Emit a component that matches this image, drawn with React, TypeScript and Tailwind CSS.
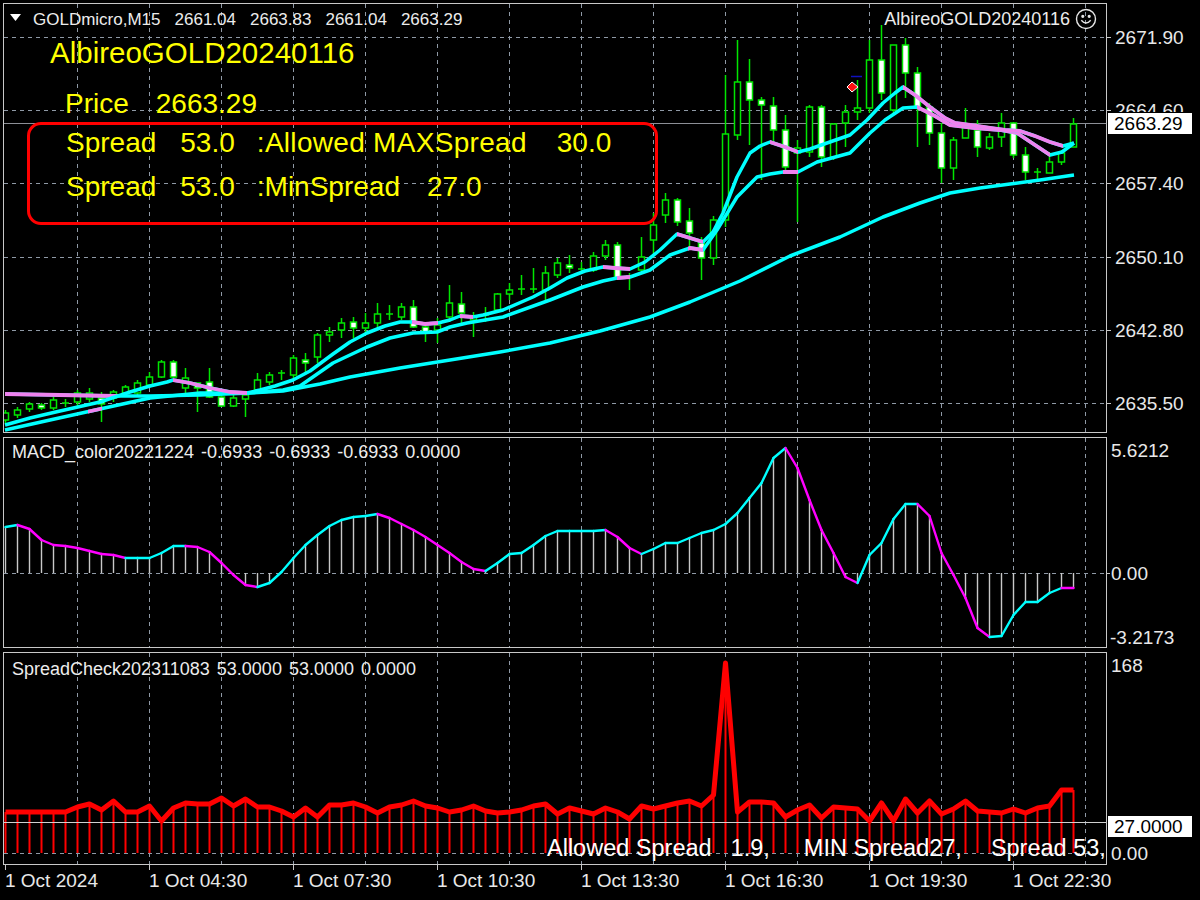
import React from 'react'

// ─── Chart data (page pixel coordinates) ─────────────────────

const GREEN = '#00e600'
const CYAN = '#00ffff'
const PINK = '#ee82ee'
const MAGENTA = '#ff00ff'
const GRID = '#8f99a6'

const barX = (i: number) => 5 + 12 * i
const GRID_X = Array.from({ length: 15 }, (_, k) => 77 + 72 * k)
const MAIN_GRID_Y = [37, 110, 183, 257, 330, 403]

// bodyTop, bodyBottom, wickTop, wickBottom, kind (0 hollow, 1 white, 2 cross)
type Candle = [number, number, number, number, number]
const CANDLES: Candle[] = [
  [413, 420, 410, 423, 0], [410, 415, 407, 418, 0], [404, 409, 402, 412, 0], [405, 408, 403, 410, 1],
  [400, 408, 397, 410, 0], [403, 403, 399, 407, 2], [393, 402, 390, 407, 0], [393, 399, 388, 402, 0],
  [398, 404, 392, 422, 1], [392, 398, 390, 402, 0], [387, 393, 385, 397, 0], [383, 393, 380, 397, 0],
  [377, 385, 372, 388, 0], [362, 377, 360, 378, 0], [362, 377, 360, 378, 1], [378, 388, 368, 397, 0],
  [383, 388, 383, 412, 1], [382, 397, 368, 398, 1], [397, 406, 393, 407, 1], [398, 406, 395, 407, 0],
  [395, 399, 393, 417, 0], [380, 390, 373, 393, 0], [375, 382, 372, 385, 0], [373, 373, 370, 380, 2],
  [358, 375, 355, 380, 0], [360, 363, 353, 373, 1], [335, 357, 333, 363, 0], [332, 335, 327, 342, 0],
  [323, 330, 318, 338, 0], [322, 328, 317, 338, 1], [323, 328, 313, 335, 0], [314, 323, 303, 328, 0],
  [314, 314, 305, 320, 2], [307, 317, 303, 320, 0], [307, 327, 300, 328, 1], [327, 332, 323, 342, 1],
  [325, 330, 318, 343, 0], [303, 317, 285, 322, 0], [304, 313, 292, 323, 1], [317, 320, 312, 337, 0],
  [315, 315, 307, 322, 2], [294, 310, 293, 312, 0], [290, 294, 283, 300, 0], [289, 289, 275, 295, 2],
  [289, 289, 268, 293, 2], [273, 290, 266, 300, 0], [263, 275, 258, 278, 0], [265, 268, 255, 273, 1],
  [269, 269, 262, 273, 2], [256, 270, 252, 272, 0], [245, 256, 240, 260, 0], [245, 278, 242, 280, 1],
  [276, 276, 273, 290, 2], [257, 270, 237, 272, 0], [225, 240, 213, 257, 0], [200, 215, 193, 223, 0],
  [200, 222, 198, 226, 1], [221, 233, 208, 250, 1], [243, 258, 237, 280, 1], [220, 258, 216, 265, 0],
  [134, 220, 75, 227, 0], [82, 135, 40, 140, 0], [82, 100, 59, 145, 1], [100, 105, 97, 180, 1],
  [106, 130, 97, 145, 1], [130, 167, 115, 170, 1], [148, 153, 140, 222, 0], [107, 152, 105, 157, 0],
  [107, 157, 105, 167, 1], [124, 157, 123, 160, 0], [112, 123, 105, 147, 0], [108, 112, 80, 120, 0],
  [60, 108, 40, 113, 0], [60, 93, 25, 100, 1], [45, 110, 45, 113, 0], [45, 73, 38, 98, 1],
  [73, 108, 67, 147, 1], [107, 133, 103, 145, 1], [133, 168, 123, 183, 1], [140, 168, 137, 180, 0],
  [127, 138, 108, 138, 0], [130, 147, 120, 157, 1], [137, 148, 133, 150, 0], [123, 137, 113, 147, 0],
  [123, 155, 122, 158, 1], [155, 172, 147, 180, 1], [172, 172, 168, 180, 2], [162, 173, 152, 173, 0],
  [153, 162, 150, 165, 0], [124, 147, 118, 147, 0],
]

const FAST = [
  [5, 425], [30, 418], [60, 411], [100, 402], [130, 392], [150, 386], [167, 382], [173, 380], [190, 383],
  [210, 388], [230, 392], [247, 393], [260, 390], [275, 386], [293, 380], [310, 371], [333, 354], [350, 342],
  [367, 333], [385, 326], [400, 322], [412, 322], [425, 324], [438, 323], [450, 320], [460, 316], [473, 317],
  [483, 315], [503, 310], [533, 297], [550, 288], [567, 278], [585, 271], [603, 267], [615, 268], [630, 269],
  [645, 262], [660, 250], [677, 234], [690, 238], [703, 242], [713, 232], [723, 213], [737, 177], [750, 153],
  [760, 146], [770, 142], [785, 147], [798, 152], [810, 149], [827, 143], [850, 135], [867, 120], [883, 103],
  [895, 93], [903, 87], [915, 95], [930, 107], [945, 118], [955, 123], [970, 125], [990, 128], [1005, 130],
  [1020, 131], [1035, 136], [1050, 142], [1063, 146], [1074, 143],
]
const MEDIUM = [
  [5, 430], [50, 420], [100, 409], [150, 398], [200, 393], [247, 393], [283, 390], [300, 386], [333, 363],
  [367, 347], [390, 338], [413, 333], [437, 332], [450, 327], [467, 323], [503, 317], [550, 300], [583, 287],
  [603, 281], [617, 278], [630, 277], [650, 270], [670, 255], [690, 248], [703, 250], [717, 230], [737, 197],
  [757, 177], [770, 174], [783, 172], [798, 172], [817, 162], [850, 153], [870, 133], [885, 120], [903, 108],
  [917, 107], [935, 116], [950, 125], [975, 128], [1000, 130], [1017, 133], [1035, 145], [1050, 155],
  [1062, 152], [1074, 143],
]
const SLOW = [
  [5, 394], [60, 395], [115, 396], [150, 396], [200, 395], [250, 393], [283, 391], [320, 384], [350, 377],
  [400, 368], [450, 360], [500, 352], [550, 343], [600, 331], [650, 317], [690, 302], [740, 281], [790, 256],
  [840, 237], [883, 217], [920, 203], [950, 193], [980, 188], [1010, 184], [1040, 180], [1074, 175],
]
const FAST_PINK: [number, number][] = [[173, 247], [412, 438], [460, 473], [603, 630], [677, 703], [770, 798], [903, 1063]]
const MEDIUM_PINK: [number, number][] = [[88, 102], [617, 630], [688, 703], [783, 798], [917, 1050]]
const SLOW_PINK: [number, number][] = [[0, 118]]

const MACD = [
  527, 525, 529, 540, 545, 546, 548, 551, 554, 555, 558, 558, 558, 553, 546, 546, 547, 552, 563, 575,
  585, 587, 583, 572, 558, 545, 535, 526, 520, 517, 516, 514, 518, 524, 530, 537, 545, 553, 562, 569,
  571, 563, 554, 553, 545, 536, 531, 531, 531, 531, 530, 537, 548, 554, 549, 543, 543, 538, 533, 530,
  524, 513, 498, 483, 458, 448, 468, 500, 530, 553, 577, 583, 555, 543, 519, 504, 504, 516, 553, 575,
  598, 628, 637, 636, 615, 602, 602, 593, 588, 588,
]

const SPREAD = [
  812, 812, 812, 812, 812, 812, 807, 804, 810, 801, 812, 812, 806, 821, 808, 803, 804, 804, 798, 806,
  799, 807, 807, 811, 817, 808, 817, 805, 805, 803, 807, 813, 807, 805, 801, 806, 808, 812, 810, 806,
  811, 813, 812, 810, 806, 804, 814, 808, 811, 814, 808, 812, 819, 806, 809, 806, 803, 801, 806, 795,
  663, 812, 802, 802, 803, 817, 810, 805, 818, 807, 808, 809, 821, 803, 821, 799, 813, 801, 814, 809,
  801, 811, 812, 813, 809, 813, 808, 806, 790, 790,
]

const TIME_LABELS = ['1 Oct 2024', '1 Oct 04:30', '1 Oct 07:30', '1 Oct 10:30', '1 Oct 13:30', '1 Oct 16:30', '1 Oct 19:30', '1 Oct 22:30']

const pts = (p: number[][]) => p.map(([x, y]) => `${x},${y}`).join(' ')

// ─── Shared pieces ───────────────────────────────────────────

function VerticalGrid({ y1, y2 }: { y1: number; y2: number }) {
  return (
    <>
      {GRID_X.map(x => (
        <line key={x} x1={x + 0.5} x2={x + 0.5} y1={y1} y2={y2} stroke={GRID} strokeDasharray="4 4" />
      ))}
    </>
  )
}

function PinkClip({ id, ranges }: { id: string; ranges: [number, number][] }) {
  return (
    <clipPath id={id}>
      {ranges.map(([a, b]) => <rect key={a} x={a} y={0} width={b - a} height={900} />)}
    </clipPath>
  )
}

function MaLine({ points, clip }: { points: number[][]; clip: string }) {
  return (
    <>
      <polyline points={pts(points)} fill="none" stroke={CYAN} strokeWidth={3.5} strokeLinejoin="round" />
      <polyline points={pts(points)} fill="none" stroke={PINK} strokeWidth={3.8} strokeLinejoin="round" clipPath={`url(#${clip})`} />
    </>
  )
}

// ─── Main price pane ─────────────────────────────────────────

function PriceChart() {
  return (
    <svg className="block" width={1102} height={428} viewBox="4 4 1102 428">
      <defs>
        <PinkClip id="pinkFast" ranges={FAST_PINK} />
        <PinkClip id="pinkMedium" ranges={MEDIUM_PINK} />
        <PinkClip id="pinkSlow" ranges={SLOW_PINK} />
      </defs>
      {MAIN_GRID_Y.map(y => (
        <line key={y} x1={4} x2={1106} y1={y + 0.5} y2={y + 0.5} stroke={GRID} strokeDasharray="4 4" />
      ))}
      <VerticalGrid y1={4} y2={432} />
      <line x1={4} x2={1106} y1={123.5} y2={123.5} stroke="#8c8f96" />

      {CANDLES.map(([t, b, wt, wb, k], i) => {
        const x = barX(i) + 0.5
        return (
          <g key={i}>
            <line x1={x} x2={x} y1={wt} y2={wb} stroke={GREEN} strokeWidth={1.5} />
            {k === 2 ? (
              <line x1={x - 3.5} x2={x + 3.5} y1={t} y2={t} stroke={GREEN} strokeWidth={1.5} />
            ) : (
              <rect x={x - 3} y={t} width={6} height={Math.max(b - t, 3)} fill={k === 1 ? '#ffffff' : '#000000'} stroke={GREEN} strokeWidth={1.5} />
            )}
          </g>
        )
      })}

      <MaLine points={SLOW} clip="pinkSlow" />
      <MaLine points={MEDIUM} clip="pinkMedium" />
      <MaLine points={FAST} clip="pinkFast" />

      {/* entry arrow */}
      <line x1={851} x2={862} y1={76.5} y2={76.5} stroke="#1010c0" strokeWidth={1.5} />
      <path d="M847 87 L852 82 L858 87 L852 92 Z" fill="#ff1010" stroke="#ffffff" strokeWidth={1} />
    </svg>
  )
}

function Smiley() {
  return (
    <svg width={22} height={22} viewBox="0 0 22 22" fill="none" stroke="#e6e6e6" strokeWidth={1.4}>
      <circle cx={11} cy={11} r={9.5} />
      <circle cx={7.8} cy={8.3} r={0.9} fill="#e6e6e6" />
      <circle cx={14.2} cy={8.3} r={0.9} fill="#e6e6e6" />
      <path d="M6.3 12.3 Q11 17.8 15.7 12.3" />
    </svg>
  )
}

// ─── MACD pane ───────────────────────────────────────────────

function MacdChart() {
  return (
    <svg className="block" width={1102} height={209} viewBox="4 438 1102 209">
      <VerticalGrid y1={438} y2={647} />
      <line x1={4} x2={1106} y1={573.5} y2={573.5} stroke={GRID} strokeDasharray="4 4" />
      {MACD.map((y, i) => (
        <line key={i} x1={barX(i) + 0.5} x2={barX(i) + 0.5} y1={573} y2={y} stroke="#c8c8c8" strokeWidth={1.4} />
      ))}
      {MACD.slice(1).map((y, j) => {
        const i = j + 1
        const up = y <= MACD[i - 1] && i !== MACD.length - 1
        return (
          <line key={i} x1={barX(i - 1) + 0.5} y1={MACD[i - 1]} x2={barX(i) + 0.5} y2={y} stroke={up ? CYAN : MAGENTA} strokeWidth={2.4} strokeLinecap="round" />
        )
      })}
    </svg>
  )
}

// ─── Spread pane ─────────────────────────────────────────────

function SpreadChart() {
  return (
    <svg className="block" width={1102} height={211} viewBox="4 653 1102 211">
      <VerticalGrid y1={653} y2={864} />
      <line x1={4} x2={1106} y1={853.5} y2={853.5} stroke={GRID} strokeDasharray="4 4" />
      {SPREAD.map((y, i) => (
        <line key={i} x1={barX(i) + 0.5} x2={barX(i) + 0.5} y1={853} y2={y} stroke="#ff0000" strokeWidth={2} />
      ))}
      <line x1={4} x2={1106} y1={822.5} y2={822.5} stroke="#d0d0d0" />
      <polyline points={SPREAD.map((y, i) => `${barX(i) + 0.5},${y}`).join(' ')} fill="none" stroke="#ff0000" strokeWidth={5} strokeLinejoin="round" />
    </svg>
  )
}

// ─── App ─────────────────────────────────────────────────────

export default function App() {
  return (
    <div className="relative flex h-[900px] w-[1200px] flex-col overflow-hidden bg-black pt-[3px] font-['Liberation_Sans',Arial,sans-serif] text-[#e8e8e8]">
      {/* Price pane */}
      <div className="flex h-[430px]">
        <div className="relative ml-[3px] h-[430px] w-[1104px] shrink-0 border border-[#c8c8c8]">
          <PriceChart />
          <svg className="absolute left-[6px] top-[10px]" width={11} height={7} viewBox="0 0 11 7">
            <polygon points="0,0 11,0 5.5,7" fill="#ffffff" />
          </svg>
          <div className="absolute left-[29px] top-[5px] flex h-[20px] items-center gap-[14px] text-[17px] leading-none text-[#ececec]">
            <span>GOLDmicro,M15</span>
            <span>2661.04</span>
            <span>2663.83</span>
            <span>2661.04</span>
            <span>2663.29</span>
          </div>
          <div className="absolute right-[9px] top-[4px] flex h-[22px] items-center gap-[5px] text-[18px] leading-none text-[#ececec]">
            <span>AlbireoGOLD20240116</span>
            <Smiley />
          </div>

          <div className="absolute left-[46px] top-[34px] text-[29.5px] leading-none text-[#ffff00]">AlbireoGOLD20240116</div>
          <div className="absolute left-[61px] top-[86px] flex gap-[27px] text-[28px] leading-none text-[#ffff00]">
            <span>Price</span>
            <span>2663.29</span>
          </div>

          <div className="absolute left-[23px] top-[118px] h-[103px] w-[631px] rounded-[14px] border-[3px] border-[#ff0000]" />
          <div className="absolute left-[62px] top-[125px] flex text-[28px] leading-none text-[#ffff00]">
            <span>Spread</span>
            <span className="ml-[24px]">53.0</span>
            <span className="ml-[22px] tracking-[0.3px]">:Allowed MAXSpread</span>
            <span className="ml-[30px]">30.0</span>
          </div>
          <div className="absolute left-[62px] top-[169px] flex text-[28px] leading-none text-[#ffff00]">
            <span>Spread</span>
            <span className="ml-[24px]">53.0</span>
            <span className="ml-[22px]">:MinSpread</span>
            <span className="ml-[27px]">27.0</span>
          </div>
        </div>

        <div className="relative flex-1 text-[19px] leading-none">
          {[
            ['top-[23px]', '2671.90'],
            ['top-[96px]', '2664.60'],
            ['top-[169px]', '2657.40'],
            ['top-[243px]', '2650.10'],
            ['top-[316px]', '2642.80'],
            ['top-[389px]', '2635.50'],
          ].map(([top, label]) => (
            <div key={label} className={`absolute left-0 flex h-[22px] items-center ${top}`}>
              <span className="h-px w-[4px] bg-[#c8c8c8]" />
              <span className="ml-[4px]">{label}</span>
            </div>
          ))}
          <div className="absolute left-0 top-[109px] flex h-[23px] w-[86px] items-center border border-black bg-white pl-[6px] text-black">
            2663.29
          </div>
        </div>
      </div>

      {/* MACD pane */}
      <div className="mt-[4px] flex h-[211px]">
        <div className="relative ml-[3px] h-[211px] w-[1104px] shrink-0 border border-[#c8c8c8]">
          <MacdChart />
          <div className="absolute left-[8px] top-[3px] flex h-[22px] items-center gap-[7px] text-[18px] leading-none text-[#ececec]">
            <span>MACD_color20221224</span>
            <span>-0.6933</span>
            <span>-0.6933</span>
            <span>-0.6933</span>
            <span>0.0000</span>
          </div>
        </div>
        <div className="relative flex-1 text-[19px] leading-none">
          <div className="absolute left-0 top-[2px] flex h-[22px] items-center pl-[4px]">5.6212</div>
          <div className="absolute left-0 top-[125px] flex h-[22px] items-center">
            <span className="h-px w-[3px] bg-[#c8c8c8]" />
            <span className="ml-[1px]">0.00</span>
          </div>
          <div className="absolute left-0 top-[189px] flex h-[22px] items-center pl-[3px]">-3.2173</div>
        </div>
      </div>

      {/* Spread pane */}
      <div className="mt-[4px] flex h-[213px]">
        <div className="relative ml-[3px] h-[213px] w-[1104px] shrink-0 border border-[#c8c8c8]">
          <SpreadChart />
          <div className="absolute left-[8px] top-[5px] flex h-[22px] items-center gap-[7px] text-[18px] leading-none text-[#ececec]">
            <span>SpreadCheck202311083</span>
            <span>53.0000</span>
            <span>53.0000</span>
            <span>0.0000</span>
          </div>
        </div>
        <div className="relative flex-1 text-[19px] leading-none">
          <div className="absolute left-0 top-[2px] flex h-[22px] items-center pl-[4px]">168</div>
          <div className="absolute left-0 top-[163px] flex h-[23px] w-[86px] items-center border border-black bg-white pl-[6px] text-black">
            27.0000
          </div>
          <div className="absolute left-0 top-[190px] flex h-[22px] items-center pl-[4px]">0.00</div>
        </div>
      </div>

      {/* Time axis */}
      <div className="flex pl-[5px]">
        {TIME_LABELS.map(label => (
          <div key={label} className="flex w-[144px] shrink-0 flex-col">
            <span className="h-[5px] w-px bg-[#c8c8c8]" />
            <span className="text-[19px] leading-[22px] whitespace-nowrap">{label}</span>
          </div>
        ))}
      </div>

      {/* Spread status text drawn over the lower pane */}
      <div className="absolute left-[547px] top-[837px] flex whitespace-nowrap text-[23.5px] leading-none text-white">
        <span>Allowed Spread</span>
        <span className="ml-[19px]">1.9,</span>
        <span className="ml-[34px]">MIN Spread27,</span>
        <span className="ml-[29px]">Spread 53,</span>
      </div>
    </div>
  )
}
